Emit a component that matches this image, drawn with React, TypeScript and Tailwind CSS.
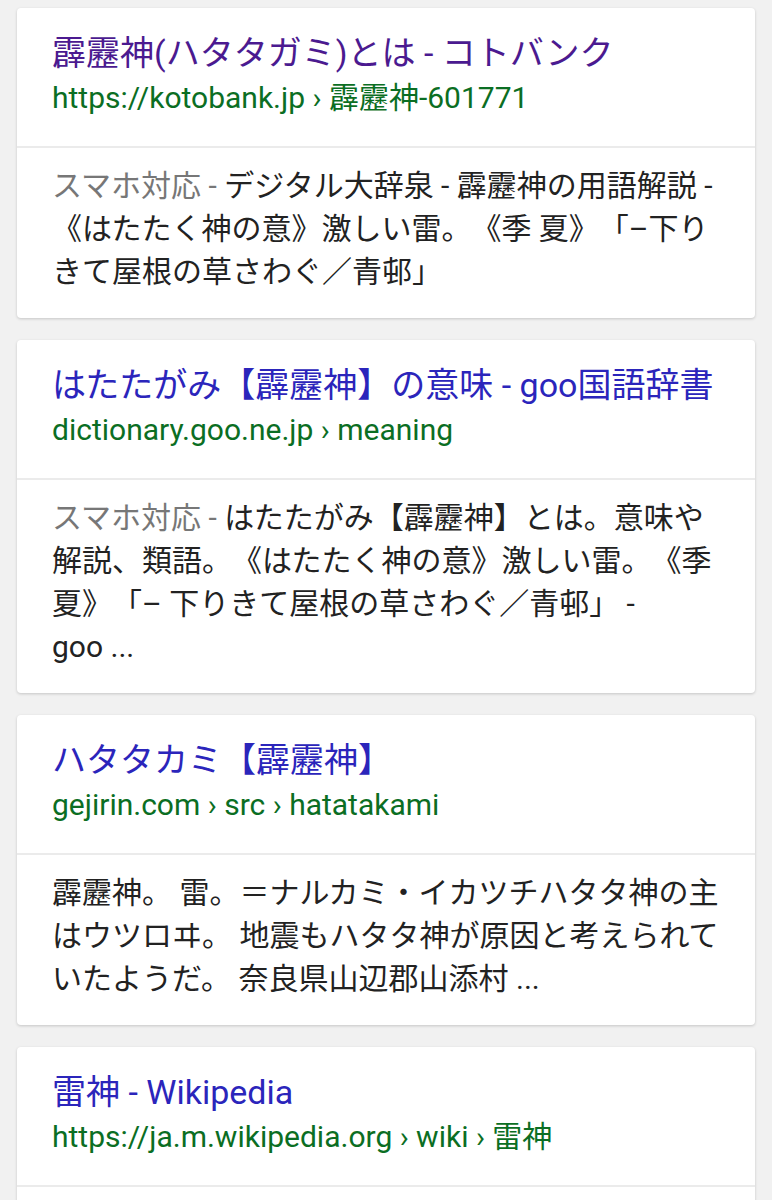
import React from 'react'

type Result = {
  title: string
  visited?: boolean
  url: string
  body?: React.ReactNode
}

const results: Result[] = [
  {
    title: '霹靂神(ハタタガミ)とは - コトバンク',
    visited: true,
    url: 'https://kotobank.jp › 霹靂神-601771',
    body: (
      <>
        <span className="text-[#777]">スマホ対応 - </span>
        デジタル大辞泉 - 霹靂神の用語解説 - 《はたたく神の意》激しい雷。《季 夏》「–下りきて屋根の草さわぐ／青邨」
      </>
    ),
  },
  {
    title: 'はたたがみ【霹靂神】の意味 - goo国語辞書',
    url: 'dictionary.goo.ne.jp › meaning',
    body: (
      <>
        <span className="text-[#777]">スマホ対応 - </span>
        はたたがみ【霹靂神】とは。意味や解説、類語。《はたたく神の意》激しい雷。《季 夏》「– 下りきて屋根の草さわぐ／青邨」 - goo&nbsp;...
      </>
    ),
  },
  {
    title: 'ハタタカミ【霹靂神】',
    url: 'gejirin.com › src › hatatakami',
    body: <>霹靂神。 雷。＝ナルカミ・イカツチハタタ神の主はウツロヰ。 地震もハタタ神が原因と考えられていたようだ。 奈良県山辺郡山添村 ...</>,
  },
  {
    title: '雷神 - Wikipedia',
    url: 'https://ja.m.wikipedia.org › wiki › 雷神',
  },
]

function ResultCard({ r }: { r: Result }) {
  return (
    <div className="bg-white rounded-[4px] shadow-[0_1px_3px_rgba(0,0,0,0.18)]">
      <div className="px-[35px] pt-[22px] pb-[26px]">
        <div className={`text-[34px] leading-[46px] whitespace-nowrap ${r.visited ? 'text-[#4b1a90]' : 'text-[#2b25bb]'}`}>
          {r.title}
        </div>
        <div className="text-[30px] leading-[44px] text-[#0b6e23] whitespace-nowrap">{r.url}</div>
      </div>
      <div className="h-[2px] bg-[#ebebeb]" />
      {r.body ? (
        <div className="px-[35px] pt-[16px] pb-[25px] text-[30px] leading-[43px] text-[#222]">{r.body}</div>
      ) : (
        <div className="h-[40px]" />
      )}
    </div>
  )
}

export default function App() {
  return (
    <div
      className="bg-[#f1f1f1] px-[17px] pt-[8px] flex flex-col gap-[22px] overflow-hidden h-[1200px] [text-spacing-trim:space-all]"
      style={{ fontFamily: 'Roboto, "Noto Sans CJK JP", sans-serif' }}
    >
      {results.map((r, i) => (
        <ResultCard key={i} r={r} />
      ))}
    </div>
  )
}
